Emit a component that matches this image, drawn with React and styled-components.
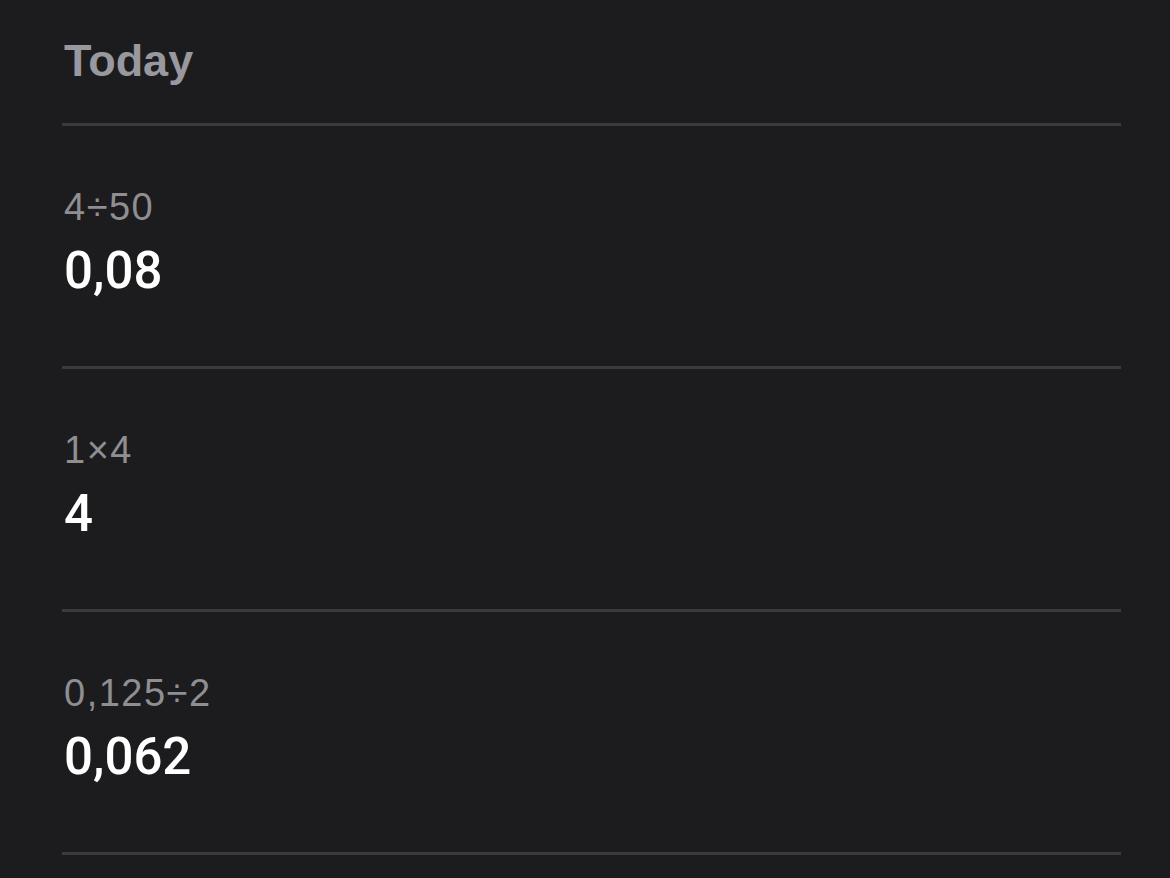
import React from 'react';
import styled, { createGlobalStyle } from 'styled-components';

const GlobalStyle = createGlobalStyle`
  html, body {
    margin: 0;
    padding: 0;
    background: #1c1c1e;
  }
  body {
    font-family: Roboto, "Liberation Sans", sans-serif;
    -webkit-font-smoothing: antialiased;
  }
`;

const Page = styled.div`
  min-height: 878px;
  padding: 38px 49px 0 62px;
  box-sizing: border-box;
  background: #1c1c1e;
`;

const SectionTitle = styled.h2`
  margin: 0 0 40px 2px;
  font-family: "Liberation Sans", Arial, sans-serif;
  font-weight: 700;
  font-size: 45px;
  line-height: 45px;
  color: #98989e;
`;

const HistoryList = styled.ul`
  list-style: none;
  margin: 0;
  padding: 0;
  border-bottom: 3px solid #3a3a3d;
`;

const HistoryRow = styled.li`
  display: flex;
  flex-direction: column;
  gap: 19px;
  padding: 62px 2px 70px;
  border-top: 3px solid #3a3a3d;
`;

const Expression = styled.div`
  font-family: "Liberation Sans", Arial, sans-serif;
  font-size: 38px;
  line-height: 38px;
  font-weight: 400;
  letter-spacing: 1.5px;
  color: #8e8e93;
`;

const Result = styled.div`
  font-size: 51px;
  line-height: 51px;
  font-weight: 500;
  color: #ffffff;
`;

const history = [
  { expr: '4÷50', result: '0,08' },
  { expr: '1×4', result: '4' },
  { expr: '0,125÷2', result: '0,062' },
];

export default function App() {
  return (
    <Page>
      <GlobalStyle />
      <SectionTitle>Today</SectionTitle>
      <HistoryList>
        {history.map((item) => (
          <HistoryRow key={item.expr}>
            <Expression>{item.expr}</Expression>
            <Result>{item.result}</Result>
          </HistoryRow>
        ))}
      </HistoryList>
    </Page>
  );
}
